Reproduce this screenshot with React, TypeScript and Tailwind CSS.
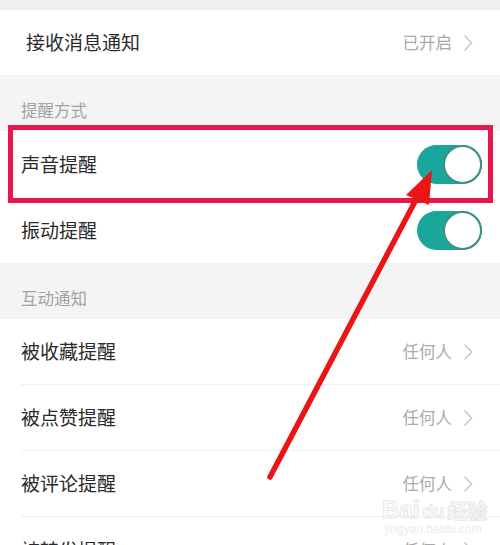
import React from "react";

const font = "font-['Noto_Sans_CJK_SC','Noto_Sans',sans-serif]";

const Chevron = () => (
    <svg width="10" height="18" viewBox="0 0 10 18" className="ml-[11px]">
        <path d="M1.5 1.5 L8.5 9 L1.5 16.5" fill="none" stroke="#c8c8c8" strokeWidth="1.6" />
    </svg>
);

const Toggle = () => (
    <div className="w-[65px] h-[39px] rounded-full bg-[#18a79a] flex items-center justify-end">
        <div className="w-[39px] h-[39px] rounded-full bg-white border-[2px] border-[#3f8f85]" />
    </div>
);

const LinkRow = ({ label, value, divider }: { label: string; value: string; divider?: boolean }) => (
    <div className="h-[66px] bg-white pl-[21px]">
        <div className={`h-full flex items-center pr-[27px] ${divider ? "border-b border-[#efefef]" : ""}`}>
            <span className="flex-1 text-[19px] text-[#2a2a2a]">{label}</span>
            <span className="text-[16.5px] text-[#a9a9a9]">{value}</span>
            <Chevron />
        </div>
    </div>
);

const Header = ({ title }: { title: string }) => (
    <div className="h-[56px] bg-[#f4f4f4] pl-[21px] pt-[25px] text-[16.5px] leading-[20px] text-[#a3a3a3]">
        {title}
    </div>
);

export default function App() {
    return (
        <div className={`relative w-[500px] h-[545px] overflow-hidden bg-[#f4f4f4] ${font}`}>
            <div className="h-[10px] bg-[#f0f0f0]" />
            <div className="h-[65px] bg-white flex items-center pl-[26px] pr-[27px]">
                <span className="flex-1 text-[19px] text-[#2a2a2a]">接收消息通知</span>
                <span className="text-[16.5px] text-[#a9a9a9]">已开启</span>
                <Chevron />
            </div>
            <Header title="提醒方式" />
            <div className="h-[66px] bg-white flex items-center pl-[21px] pr-[18px]">
                <span className="flex-1 text-[19px] text-[#2a2a2a]">声音提醒</span>
                <Toggle />
            </div>
            <div className="h-[66px] bg-white flex items-center pl-[21px] pr-[18px]">
                <span className="flex-1 text-[19px] text-[#2a2a2a]">振动提醒</span>
                <Toggle />
            </div>
            <Header title="互动通知" />
            <LinkRow label="被收藏提醒" value="任何人" divider />
            <LinkRow label="被点赞提醒" value="任何人" divider />
            <LinkRow label="被评论提醒" value="任何人" divider />
            <LinkRow label="被转发提醒" value="任何人" />

            {/* highlight box */}
            <div className="absolute left-[8px] top-[125px] w-[485px] h-[78px] border-[5px] border-[#e8164a]" />

            {/* baidu watermark */}
            <div className="absolute left-[382px] top-[497px] flex items-end gap-[3px] text-white/60 [-webkit-text-stroke:1px_#e6e6e6] font-['Liberation_Sans',sans-serif] font-bold">
                <span className="text-[24px] leading-[26px]">Bai</span>
                <span className="text-[18px] leading-[22px]">du</span>
                <span className={`text-[20px] leading-[24px] ${font}`}>经验</span>
            </div>
            <div className="absolute left-[385px] top-[520px] text-[12px] text-[#ececec] font-['Liberation_Sans',sans-serif]">
                jingyan.baidu.com
            </div>

            {/* arrow */}
            <svg className="absolute left-0 top-0" width="500" height="545" viewBox="0 0 500 545">
                <line x1="270" y1="477" x2="420" y2="192" stroke="#ec1515" strokeWidth="5.5" strokeLinecap="round" />
                <polygon points="432,170 406,195 429,205" fill="#ec1515" />
            </svg>
        </div>
    );
}
